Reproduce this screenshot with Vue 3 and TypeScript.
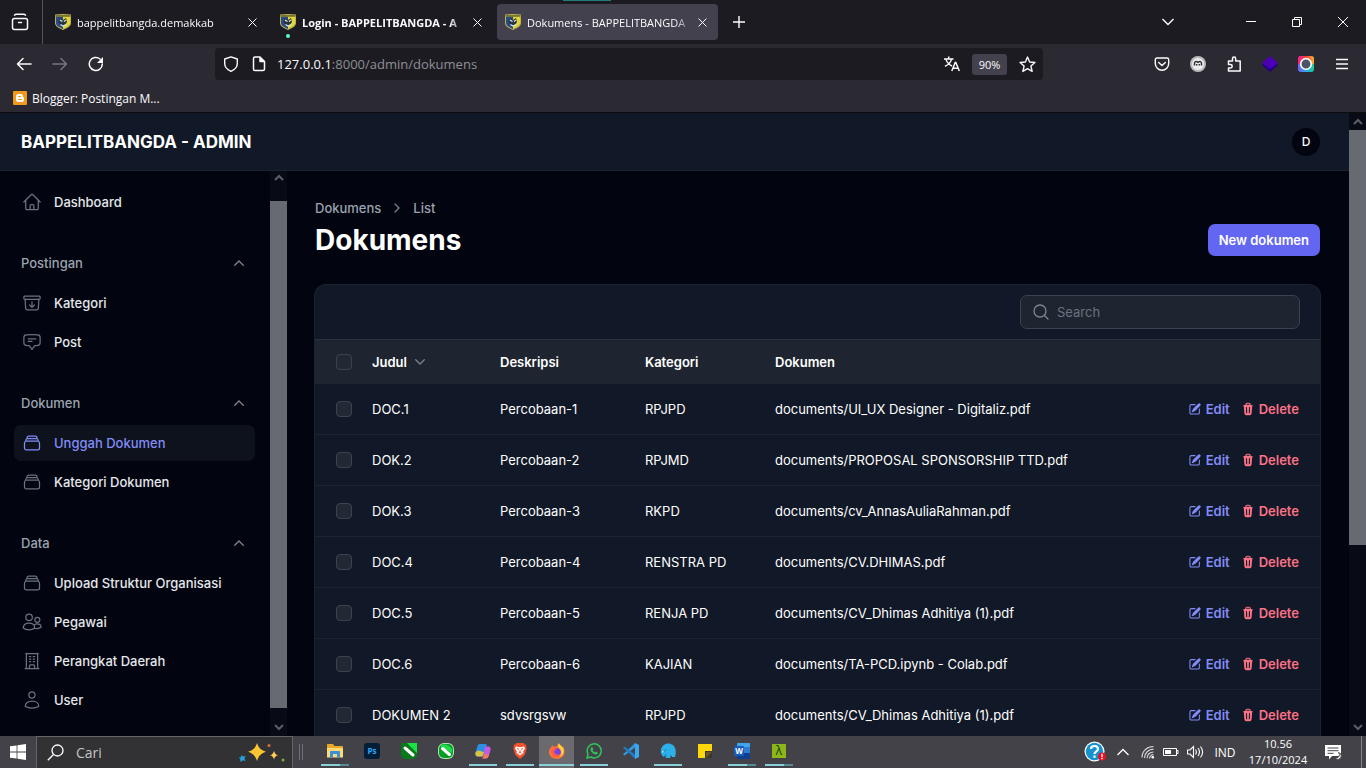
<script setup lang="ts">
import { ref } from 'vue'

interface Tab { title: string; active?: boolean; bold?: boolean; dot?: boolean }
interface NavItem { label: string; icon: string; active?: boolean }
interface NavGroup { label: string; items: NavItem[] }
interface Row { judul: string; deskripsi: string; kategori: string; dokumen: string; checked: boolean }
interface TaskApp { name: string; run?: 'one' | 'many'; active?: boolean }

const tabs: Tab[] = [
  { title: 'bappelitbangda.demakkab' },
  { title: 'Login - BAPPELITBANGDA - A', bold: true, dot: true },
  { title: 'Dokumens - BAPPELITBANGDA', active: true },
]

const icons: Record<string, string> = {
  home: 'M2.25 12l8.954-8.955c.44-.439 1.152-.439 1.591 0L21.75 12M4.5 9.75v10.125c0 .621.504 1.125 1.125 1.125H9.75v-4.875c0-.621.504-1.125 1.125-1.125h2.25c.621 0 1.125.504 1.125 1.125V21h4.125c.621 0 1.125-.504 1.125-1.125V9.75M8.25 21h8.25',
  archive: 'M20.25 7.5l-.625 10.632a2.25 2.25 0 01-2.247 2.118H6.622a2.25 2.25 0 01-2.247-2.118L3.75 7.5m8.25 3v6.75m0 0l-3-3m3 3l3-3M3.375 7.5h17.25c.621 0 1.125-.504 1.125-1.125v-1.5c0-.621-.504-1.125-1.125-1.125H3.375c-.621 0-1.125.504-1.125 1.125v1.5c0 .621.504 1.125 1.125 1.125z',
  chat: 'M7.5 8.25h9m-9 3H12m-9.75 1.51c0 1.6 1.123 2.994 2.707 3.227 1.129.166 2.27.293 3.423.379.35.026.67.21.865.501L12 21l2.755-4.133a1.14 1.14 0 01.865-.501 48.172 48.172 0 003.423-.379c1.584-.233 2.707-1.626 2.707-3.228V6.741c0-1.602-1.123-2.995-2.707-3.228A48.394 48.394 0 0012 3c-2.392 0-4.744.175-7.043.513C3.373 3.746 2.25 5.14 2.25 6.741v6.018z',
  stack: 'M6 6.878V6a2.25 2.25 0 012.25-2.25h7.5A2.25 2.25 0 0118 6v.878m-12 0c.235-.083.487-.128.75-.128h10.5c.263 0 .515.045.75.128m-12 0A2.25 2.25 0 004.5 9v.878m13.5-3A2.25 2.25 0 0119.5 9v.878m0 0a2.246 2.246 0 00-.75-.128H5.25c-.263 0-.515.045-.75.128m15 0A2.25 2.25 0 0121 12v6a2.25 2.25 0 01-2.25 2.25H5.25A2.25 2.25 0 013 18v-6c0-.98.626-1.813 1.5-2.122',
  users: 'M12.4 6.4a3.9 3.9 0 11-7.8 0 3.9 3.9 0 017.8 0zM21.4 9.3a3 3 0 11-6 0 3 3 0 016 0zM1.5 19.2c0-3.7 3-6 6.9-6s6.9 2.300 6.900 6c-1.800 1.600-4.200 2.300-6.900 2.300s-5.100-.7-6.900-2.300zM14.600 15.700c.9-.9 2.200-1.400 3.600-1.400 2.800 0 4.700 1.600 4.700 4-1.600 1.300-4.400 1.800-7.500 1.400',
  building: 'M3.75 21h16.5M4.5 3h15M5.25 3v18m13.5-18v18M9 6.75h1.5m-1.5 3h1.5m-1.5 3h1.5m3-6H15m-1.5 3H15m-1.5 3H15M9 21v-3.375c0-.621.504-1.125 1.125-1.125h3.75c.621 0 1.125.504 1.125 1.125V21',
  user: 'M15.75 6a3.75 3.75 0 11-7.5 0 3.75 3.75 0 017.5 0zM3.900 19.500c0-3.700 3.600-6.100 8.100-6.100s8.100 2.400 8.100 6.100c-2.200 1.500-5 2.300-8.100 2.300s-5.900-.8-8.100-2.300z',
}

const groups: NavGroup[] = [
  { label: 'Postingan', items: [{ label: 'Kategori', icon: 'archive' }, { label: 'Post', icon: 'chat' }] },
  { label: 'Dokumen', items: [{ label: 'Unggah Dokumen', icon: 'stack', active: true }, { label: 'Kategori Dokumen', icon: 'stack' }] },
  {
    label: 'Data',
    items: [
      { label: 'Upload Struktur Organisasi', icon: 'stack' },
      { label: 'Pegawai', icon: 'users' },
      { label: 'Perangkat Daerah', icon: 'building' },
      { label: 'User', icon: 'user' },
    ],
  },
]

const rows = ref<Row[]>([
  { judul: 'DOC.1', deskripsi: 'Percobaan-1', kategori: 'RPJPD', dokumen: 'documents/UI_UX Designer - Digitaliz.pdf', checked: false },
  { judul: 'DOK.2', deskripsi: 'Percobaan-2', kategori: 'RPJMD', dokumen: 'documents/PROPOSAL SPONSORSHIP TTD.pdf', checked: false },
  { judul: 'DOK.3', deskripsi: 'Percobaan-3', kategori: 'RKPD', dokumen: 'documents/cv_AnnasAuliaRahman.pdf', checked: false },
  { judul: 'DOC.4', deskripsi: 'Percobaan-4', kategori: 'RENSTRA PD', dokumen: 'documents/CV.DHIMAS.pdf', checked: false },
  { judul: 'DOC.5', deskripsi: 'Percobaan-5', kategori: 'RENJA PD', dokumen: 'documents/CV_Dhimas Adhitiya (1).pdf', checked: false },
  { judul: 'DOC.6', deskripsi: 'Percobaan-6', kategori: 'KAJIAN', dokumen: 'documents/TA-PCD.ipynb - Colab.pdf', checked: false },
  { judul: 'DOKUMEN 2', deskripsi: 'sdvsrgsvw', kategori: 'RPJPD', dokumen: 'documents/CV_Dhimas Adhitiya (1).pdf', checked: false },
])

const search = ref('')
const address = ref('')

const apps: TaskApp[] = [
  { name: 'explorer', run: 'many' },
  { name: 'photoshop' },
  { name: 'coreldraw' },
  { name: 'corel' },
  { name: 'copilot', run: 'one' },
  { name: 'brave', run: 'one' },
  { name: 'firefox', run: 'one', active: true },
  { name: 'whatsapp', run: 'one' },
  { name: 'vscode' },
  { name: 'laragon', run: 'one' },
  { name: 'notes' },
  { name: 'word', run: 'many' },
  { name: 'terminal', run: 'many' },
]

function toggleAll(e: Event) {
  const on = (e.target as HTMLInputElement).checked
  rows.value.forEach((r) => (r.checked = on))
}
</script>

<template>
  <div class="desktop">
    <!-- Browser tab strip -->
    <div class="tabstrip">
      <span class="loading"></span>
      <button class="view" aria-label="Firefox View">
        <svg width="18" height="18" viewBox="0 0 18 18" fill="none" stroke="currentColor" stroke-width="1.500" stroke-linecap="round">
          <rect x="1.500" y="5.500" width="15" height="11" rx="2" /><path d="M3.500 2.200C4 1.400 4.500 1.200 5.500 1.200h7c1 0 1.500.2 2 1M7.500 9.500h3" />
        </svg>
      </button>
      <div v-for="t in tabs" :key="t.title" class="tab" :class="{ active: t.active, bold: t.bold }">
        <span class="favicon">
          <svg width="16" height="16" viewBox="0 0 16 16">
            <path d="M0 .5 8 0l8 .5v9C15.500 13 11 14.500 8 16 5 14.500.5 13 0 9.500z" fill="#b9b555" />
            <path d="M1 2.500h7V15C5 13.500 1.500 12 1 9.500z" fill="#2b4a86" />
            <path d="M8 2.500h7v6c-.5 3-4 5-7 6z" fill="#e5d733" />
            <path d="M.5 1h15v1.800H.5z" fill="#77772f" />
            <path d="M5 4l3 2 3-2 1 4-2 3-2 1-3-1.500L3.500 8z" fill="#26353f" />
            <path d="M5 6.200l2.500 1.300M9 7.500l2-1.500M5.500 10.500 8 12l3-1.500" fill="none" stroke="#d8e4ea" stroke-width="1.300" />
          </svg>
          <i v-if="t.dot" class="dot"></i>
        </span>
        <span class="tabtitle">{{ t.title }}</span>
        <button class="tabclose" aria-label="Close tab">
          <svg width="9" height="9" viewBox="0 0 9 9" stroke="currentColor"><path d="M.5.5l8 8M8.500.5l-8 8" /></svg>
        </button>
      </div>
      <button class="newtab" aria-label="New tab">
        <svg width="12" height="12" viewBox="0 0 12 12" stroke="currentColor" stroke-width="1.400"><path d="M6 0v12M0 6h12" /></svg>
      </button>
      <div class="spring"></div>
      <button class="alltabs" aria-label="List all tabs">
        <svg width="12" height="8" viewBox="0 0 12 8" fill="none" stroke="currentColor" stroke-width="1.400"><path d="M.5 1 6 6.500 11.500 1" /></svg>
      </button>
      <button class="winbtn" aria-label="Minimize"><svg width="10" height="10" viewBox="0 0 10 10"><path d="M0 4.500h10" stroke="#fff" /></svg></button>
      <button class="winbtn" aria-label="Restore">
        <svg width="10" height="10" viewBox="0 0 10 10" fill="none" stroke="#fff"><path d="M.5 2.500h7v7h-7zM2.500 2.500v-2h7v7h-2" /></svg>
      </button>
      <button class="winbtn" aria-label="Close"><svg width="10" height="10" viewBox="0 0 10 10" stroke="#fff"><path d="M0 0l10 10M10 0 0 10" /></svg></button>
    </div>

    <!-- Navigation toolbar -->
    <div class="toolbar">
      <button class="tool" aria-label="Back">
        <svg width="16" height="16" viewBox="0 0 16 16" fill="none" stroke="currentColor" stroke-width="1.500" stroke-linecap="round" stroke-linejoin="round"><path d="M15 8H1.500M7 2.500 1.500 8 7 13.500" /></svg>
      </button>
      <button class="tool dim" aria-label="Forward">
        <svg width="16" height="16" viewBox="0 0 16 16" fill="none" stroke="currentColor" stroke-width="1.500" stroke-linecap="round" stroke-linejoin="round"><path d="M1 8h13.500M9 2.500 14.500 8 9 13.500" /></svg>
      </button>
      <button class="tool" aria-label="Reload">
        <svg width="16" height="16" viewBox="0 0 16 16" fill="none" stroke="currentColor" stroke-width="1.500" stroke-linecap="round"><path d="M14.300 8A6.500 6.500 0 1 1 12 3" /><path d="M15 1v6H9z" fill="currentColor" stroke="none" /></svg>
      </button>
      <div class="urlbar">
        <svg class="urlicon" width="16" height="16" viewBox="0 0 16 16" fill="none" stroke="currentColor" stroke-width="1.400" stroke-linejoin="round"><path d="M8 .8 14.300 3v4.500c0 3.500-2.500 6.200-6.300 7.800C4.200 13.700 1.700 11 1.700 7.500V3z" /></svg>
        <svg class="urlicon" width="16" height="16" viewBox="0 0 16 16" fill="none" stroke="currentColor" stroke-width="1.500" stroke-linejoin="round"><path d="M2.500 2.500c0-1 .5-1.500 1.500-1.500h5l4.500 4.500V13c0 1-.5 1.500-1.500 1.500H4c-1 0-1.500-.5-1.500-1.500z" /><path d="M9 1v4.500h4.500" fill="currentColor" /></svg>
        <label class="address">
          <span class="host">127.0.0.1</span><span>:8000/admin/dokumens</span>
          <input v-model="address" type="text" aria-label="Address" />
        </label>
        <button class="urlbtn" aria-label="Translate page">
          <svg width="16" height="16" viewBox="0 0 16 16" fill="none" stroke="currentColor" stroke-width="1.500"><path d="M0 3h9.500M4.700.5V3M2 3c.5 3 3 5.500 6 7M7.500 3C7 6 4.500 8.700 1 10.300M7.800 15l3.400-8.500h.6L15.300 15M9 12.300h5" /></svg>
        </button>
        <button class="zoom">90%</button>
        <button class="urlbtn" aria-label="Bookmark">
          <svg width="17" height="17" viewBox="0 0 16 16" fill="none" stroke="currentColor" stroke-width="1.300" stroke-linejoin="round"><path d="m8 1 2 4.600 5 .5-3.800 3.300 1.200 5.100L8 11.900l-4.400 2.600 1.200-5.100L1 6.100l5-.5z" /></svg>
        </button>
      </div>
      <button class="tool" aria-label="Pocket">
        <svg width="16" height="16" viewBox="0 0 16 16" fill="none" stroke="currentColor" stroke-width="1.400" stroke-linecap="round" stroke-linejoin="round"><path d="M3 2h10c1 0 1.700.7 1.700 1.700V7.500a6.700 6.700 0 0 1-13.400 0V3.700C1.300 2.700 2 2 3 2zM4.700 6.500 8 9.500l3.300-3" /></svg>
      </button>
      <button class="tool" aria-label="Extension">
        <svg width="16" height="16" viewBox="0 0 16 16"><circle cx="8" cy="8" r="8" fill="#b9b9bd" /><circle cx="8" cy="8" r="6" fill="#ececee" /><path d="M4.500 9.500V7.500C4.500 5.500 6 5 8 6.300c2-1.300 3.500-.8 3.500 1.200v2M6.700 9.500V8M9.300 9.500V8" fill="none" stroke="#303035" stroke-width="1.500" /></svg>
      </button>
      <button class="tool" aria-label="Extensions">
        <svg width="16" height="16" viewBox="0 0 16 16" fill="none" stroke="currentColor" stroke-width="1.500" stroke-linejoin="round"><path d="M2.500 15v-3h2a1.700 1.700 0 0 0 0-3.400h-2V5h4V2.700a1.600 1.600 0 0 1 3.200 0V5h4.500v10z" /></svg>
      </button>
      <button class="tool" aria-label="Stack extension">
        <svg width="16" height="16" viewBox="0 0 16 16"><path d="M8 3l8 6-8 7-8-7z" fill="#260080" /><path d="M8 0l8 7-8 6-8-6z" fill="#4b00b5" /></svg>
      </button>
      <button class="tool" aria-label="Camera extension">
        <svg width="16" height="16" viewBox="0 0 16 16">
          <defs>
            <linearGradient id="camTop" x1="0" y1="0" x2="1" y2="0"><stop offset="0" stop-color="#f0208a" /><stop offset=".5" stop-color="#ff3a3a" /><stop offset="1" stop-color="#f8b02c" /></linearGradient>
            <linearGradient id="camLow" x1="0" y1="0" x2="1" y2="0"><stop offset="0" stop-color="#7a5cf5" /><stop offset=".5" stop-color="#28a8f0" /><stop offset="1" stop-color="#1fcf8d" /></linearGradient>
          </defs>
          <rect width="16" height="16" rx="3" fill="url(#camLow)" /><path d="M0 8V3a3 3 0 0 1 3-3h10a3 3 0 0 1 3 3v5z" fill="url(#camTop)" />
          <circle cx="8" cy="8" r="5.300" fill="#4a5568" stroke="#fff" stroke-width="1.700" />
        </svg>
      </button>
      <button class="tool" aria-label="Menu">
        <svg width="12" height="12" viewBox="0 0 12 12" stroke="currentColor" stroke-width="1.300"><path d="M0 1.500h12M0 6h12M0 10.500h12" /></svg>
      </button>
      <span class="toolend"></span>
    </div>

    <div class="bookmarks">
      <a href="#blogger">
        <svg width="14" height="14" viewBox="0 0 14 14"><rect width="14" height="14" rx="1" fill="#f09a1d" /><path d="M5.500 3h2A2.500 2.500 0 0 1 10 5.500c0 .7.3.9 1 1v2A2.500 2.500 0 0 1 8.500 11h-3A2.500 2.500 0 0 1 3 8.500v-3A2.500 2.500 0 0 1 5.500 3z" fill="#fff" /><path d="M5.500 5.500h2M5.500 8.500h3" stroke="#f09a1d" stroke-linecap="round" /></svg>
        Blogger: Postingan M...
      </a>
    </div>

    <!-- Admin panel -->
    <div class="viewport">
      <div class="app">
        <header class="topbar">
          <a class="brand" href="#home">BAPPELITBANGDA - ADMIN</a>
          <button class="avatar" aria-label="User menu">D</button>
        </header>
        <div class="body">
          <aside class="sidebar">
            <nav class="nav">
              <a class="item" href="#dashboard">
                <svg width="20" height="20" viewBox="0 0 24 24"><path :d="icons.home" /></svg>Dashboard
              </a>
              <section v-for="g in groups" :key="g.label" class="group">
                <button class="grouphead">
                  {{ g.label }}
                  <svg width="10" height="6" viewBox="0 0 10 6"><path d="M.7 5.300 5 1l4.300 4.300" /></svg>
                </button>
                <div class="items">
                  <a v-for="i in g.items" :key="i.label" class="item" :class="{ current: i.active }" :href="'#' + i.label">
                    <svg width="20" height="20" viewBox="0 0 24 24"><path :d="icons[i.icon]" /></svg>{{ i.label }}
                  </a>
                </div>
              </section>
            </nav>
            <div class="scroll side">
              <svg width="10" height="7" viewBox="0 0 10 7"><path d="M1 6l4-4 4 4" /></svg>
              <div class="track"><div class="thumb"></div></div>
              <svg width="10" height="7" viewBox="0 0 10 7"><path d="M1 1l4 4 4-4" /></svg>
            </div>
          </aside>

          <main class="main">
            <div class="pagehead">
              <div>
                <nav class="crumbs">
                  <a href="#dokumens">Dokumens</a>
                  <svg width="6" height="10" viewBox="0 0 6 10"><path d="M1 1l4 4-4 4" /></svg>
                  <span>List</span>
                </nav>
                <h1>Dokumens</h1>
              </div>
              <button class="primary">New dokumen</button>
            </div>

            <div class="card">
              <div class="cardtop">
                <label class="search">
                  <svg width="16" height="16" viewBox="0 0 16 16"><circle cx="7" cy="7" r="6" /><path d="M11.500 11.500 15 15" /></svg>
                  <input v-model="search" type="search" placeholder="Search" aria-label="Search" />
                </label>
              </div>
              <table>
                <colgroup><col class="c1" /><col class="c2" /><col class="c3" /><col class="c4" /><col /><col class="c6" /></colgroup>
                <thead>
                  <tr>
                    <th class="pick"><input type="checkbox" aria-label="Select all" @change="toggleAll" /></th>
                    <th>
                      <button class="sort">Judul <svg width="10" height="6" viewBox="0 0 10 6"><path d="M.7.7 5 5 9.300.7" /></svg></button>
                    </th>
                    <th>Deskripsi</th><th>Kategori</th><th>Dokumen</th><th></th>
                  </tr>
                </thead>
                <tbody>
                  <tr v-for="r in rows" :key="r.judul">
                    <td class="pick"><input v-model="r.checked" type="checkbox" :aria-label="'Select ' + r.judul" /></td>
                    <td>{{ r.judul }}</td><td>{{ r.deskripsi }}</td><td>{{ r.kategori }}</td><td>{{ r.dokumen }}</td>
                    <td>
                      <div class="actions">
                        <a class="edit" href="#edit">
                          <svg width="14" height="14" viewBox="0 0 20 20"><path d="m5.433 13.917 1.262-3.155A4 4 0 0 1 7.580 9.420l6.920-6.918a2.121 2.121 0 0 1 3 3l-6.920 6.918c-.383.383-.84.685-1.343.886l-3.154 1.262a.5.5 0 0 1-.65-.65Z" /><path d="M3.500 5.750c0-.69.56-1.250 1.250-1.250H10A.75.75 0 0 0 10 3H4.750A2.750 2.750 0 0 0 2 5.750v9.500A2.750 2.750 0 0 0 4.750 18h9.500A2.750 2.750 0 0 0 17 15.250V10a.75.75 0 0 0-1.500 0v5.250c0 .69-.56 1.250-1.250 1.250h-9.500c-.69 0-1.250-.56-1.250-1.250v-9.500Z" /></svg>Edit
                        </a>
                        <button class="delete">
                          <svg width="14" height="14" viewBox="0 0 20 20"><path fill-rule="evenodd" d="M8.750 1A2.750 2.750 0 0 0 6 3.750v.443c-.795.077-1.584.176-2.365.298a.75.75 0 1 0 .23 1.482l.149-.022.841 10.518A2.750 2.750 0 0 0 7.596 19h4.807a2.750 2.750 0 0 0 2.742-2.530l.841-10.520.149.023a.75.75 0 0 0 .23-1.482A41.030 41.030 0 0 0 14 4.193V3.750A2.750 2.750 0 0 0 11.250 1h-2.500ZM10 4c.84 0 1.673.025 2.500.075V3.750c0-.69-.56-1.250-1.250-1.250h-2.500c-.69 0-1.250.56-1.250 1.250v.325C8.327 4.025 9.160 4 10 4ZM8.580 7.720a.75.75 0 0 0-1.500.06l.3 7.500a.75.75 0 1 0 1.500-.06l-.3-7.500Zm4.340.06a.75.75 0 1 0-1.500-.06l-.3 7.500a.75.75 0 1 0 1.500.06l.3-7.500Z" /></svg>Delete
                        </button>
                      </div>
                    </td>
                  </tr>
                </tbody>
              </table>
            </div>
          </main>
        </div>
      </div>
      <div class="scroll page">
        <svg width="10" height="7" viewBox="0 0 10 7"><path d="M1 6l4-4 4 4" /></svg>
        <div class="track"><div class="thumb"></div></div>
        <svg width="10" height="7" viewBox="0 0 10 7"><path d="M1 1l4 4 4-4" /></svg>
      </div>
    </div>

    <!-- Windows taskbar -->
    <footer class="taskbar">
      <button class="start" aria-label="Start">
        <svg width="16" height="16" viewBox="0 0 16 16" fill="#fff"><path d="M0 2.300 6.600 1.400v6.200H0zM7.400 1.300 16 0v7.600H7.400zM0 8.400h6.600v6.200L0 13.700zM7.400 8.400H16V16l-8.600-1.300z" /></svg>
      </button>
      <label class="find">
        <svg width="17" height="17" viewBox="0 0 17 17" fill="none" stroke="#fff" stroke-width="1.300"><circle cx="10.500" cy="6.500" r="5.500" /><path d="M6.500 10.500.8 16.200" /></svg>
        <input type="text" placeholder="Cari" aria-label="Cari" />
        <svg width="48" height="20" viewBox="0 0 48 20">
          <path d="M19 0c1.800 5 3.500 7 9 8.800C22.500 10.700 20.800 13 19 18c-1.800-5-3.500-7.300-9-9.200C15.500 7 17.200 5 19 0z" fill="#fbc531" />
          <path d="M36 8c.8 2.500 1.500 3.500 4 4.300-2.500.7-3.200 1.700-4 4.200-.8-2.500-1.500-3.500-4-4.200 2.500-.8 3.200-1.800 4-4.300z" fill="#ffd050" />
          <path d="m3 12 2 1.500L7.500 13l-1 2.500 1 2.500-2.500-.7L2.500 19l-.2-2.500L1 14.500l2-.3z" fill="#25a0da" />
          <circle cx="31" cy="2.500" r="1.500" fill="#d96c3c" /><circle cx="45" cy="17" r="1.500" fill="#76b043" />
        </svg>
      </label>
      <span class="grip"></span>
      <div class="apps">
        <button v-for="a in apps" :key="a.name" class="appbtn" :class="[a.run, { on: a.active }]" :aria-label="a.name">
          <svg width="16" height="16" viewBox="0 0 16 16">
            <template v-if="a.name === 'explorer'">
              <path d="M0 2c0-.6.4-1 1-1h5l1.500 2H15c.6 0 1 .4 1 1v9H0z" fill="#e8a92b" /><path d="M0 5h16v9.500H0z" fill="#ffd974" /><path d="M3 14.500V9c0-.6.4-1 1-1h8c.6 0 1 .4 1 1v5.500h-3V11H6v3.500z" fill="#3a8fd8" />
            </template>
            <template v-else-if="a.name === 'photoshop'">
              <rect width="16" height="16" rx="3" fill="#001e36" /><text x="8" y="11" text-anchor="middle" font-size="8" font-weight="700" fill="#31a8ff">Ps</text>
            </template>
            <template v-else-if="a.name === 'coreldraw'">
              <path d="M0 0h16v13l-3 3H3l-3-3z" fill="#087a1b" /><path d="M0 0h16v10L6 0z" fill="#16e343" /><path d="M4 5l8 7" stroke="#fff" stroke-width="3" stroke-linecap="round" />
            </template>
            <template v-else-if="a.name === 'corel'">
              <rect width="16" height="16" rx="6" fill="#a9e5b0" /><rect x="1" y="1" width="14" height="14" rx="5" fill="#0a9c26" /><path d="M2 3q6-4 12 3v4z" fill="#20dc48" /><path d="M4.500 5.500l7 6" stroke="#fff" stroke-width="3" stroke-linecap="round" />
            </template>
            <template v-else-if="a.name === 'copilot'">
              <path d="M5 1h5.500c1.200 0 1.500 1 1.200 2L9 11.500C8.500 13 8 13.500 6.500 13.500H3C0 13.500 0 11 .8 8.500L2.200 4C2.800 2 3.500 1 5 1z" fill="#2c8fe6" /><path d="M.7 9l2.500-1.500L9 9l-1 3c-.4 1-1 1.500-2 1.500H3C.3 13.500.2 11 .7 9z" fill="#d9c43c" /><path d="M10 3.500h3c3 0 3 2.500 2.200 5L13.800 12.500c-.6 2-1.300 3-2.800 3H6.500C8 15.500 8 14 8.400 12.500z" fill="#c65be0" /><path d="M8.800 11.500h5.300c-.8 2.800-1.400 4-3.100 4H7c1.200-.5 1.300-2 1.800-4z" fill="#f27a58" />
            </template>
            <template v-else-if="a.name === 'brave'">
              <path d="M4.500 0h7l1.500 1.500 1.500.5-.3 2 .5 1.500-2 6.500L8 16l-4.700-4L1.300 5.500 1.800 4l-.3-2L3 1.500z" fill="#f0512b" /><path d="M4 3.500l4 .7 4-.7 1 2-2 3 .5 1.500L8 12.500 4.500 10 5 8.500l-2-3z" fill="#fff" /><path d="M5 5.500l2 .8M11 5.500l-2 .8M8 7v2.500M6.500 10 8 9.500l1.500.5" stroke="#f0512b" fill="none" />
            </template>
            <template v-else-if="a.name === 'firefox'">
              <path d="M3 2l2 2c1-.7 2-.8 3-.7C8 2 9 .8 10 0c0 2 3 2.500 4 4.500V3c3 5 2 12-5.500 13C3 16 0 13 0 9c0-2.500 1-4 2.500-5z" fill="#ff7139" /><path d="M10 0c0 2 3 3 4 5 2 4 0 8-4 9 3-3 3-6 0-9-1.500-1.500-1-3.500 0-5z" fill="#ffd43d" /><circle cx="8" cy="9" r="3.800" fill="#7542e5" /><path d="M2 7c2-1.500 4-1.500 6 0l-3 1c0 3 3 4 6 3-3 4-9 2-9-4z" fill="#ff5a4d" />
            </template>
            <template v-else-if="a.name === 'whatsapp'">
              <path d="M1 15l1-3.800A7 7 0 1 1 4.800 14z" fill="none" stroke="#2fc45b" stroke-width="1.500" /><path d="M5 4.500l1.500-.2.800 2-.8 1c.5 1 1.300 1.700 2.300 2.200l.9-1 2 1c.2 1.500-1.200 2.200-2.200 2C6.500 11 4.500 8 4.500 6z" fill="#2fc45b" />
            </template>
            <template v-else-if="a.name === 'vscode'">
              <path d="M12 0v4.500L1.500 12.500 0 11.200 8 4z" fill="#2c9be0" /><path d="M12 16v-4.500L1.500 3.500 0 4.800 8 12z" fill="#1f7cc0" /><path d="M12 0l4 2v12l-4 2z" fill="#3aa7ee" />
            </template>
            <template v-else-if="a.name === 'laragon'">
              <path d="M2 4c2-3.500 7-5 11-2 3 3 3.500 7 2 12h-3l-1-2-1 3H6l-1-3-1 2C1 12-.5 8 2 4z" fill="#2bb0e8" /><path d="M1 8c2 1 4 1 5-2M6 15l-.5-4" stroke="#1686bb" fill="none" /><circle cx="2.700" cy="8.700" r=".8" fill="#fff" />
            </template>
            <template v-else-if="a.name === 'notes'">
              <path d="M1 1h14v8l-6 6H1z" fill="#ffd60a" /><path d="M8 8h7v7H8z" fill="#3b372b" /><path d="M15 9l-6 6V9z" fill="#64542a" />
            </template>
            <template v-else-if="a.name === 'word'">
              <rect x="3" width="13" height="16" rx="1" fill="#2b7cd3" /><path d="M3 1c0-.6.4-1 1-1h11c.6 0 1 .4 1 1v3H3z" fill="#41a5ee" /><path d="M3 10h13v5c0 .6-.4 1-1 1H4c-.6 0-1-.4-1-1z" fill="#103f91" /><rect y="3" width="10" height="10" rx="1" fill="#185abd" /><text x="5" y="11" text-anchor="middle" font-size="8" font-weight="700" fill="#fff">W</text>
            </template>
            <template v-else>
              <rect x="1" y="1" width="14" height="14" fill="#8cb817" /><text x="8" y="12" text-anchor="middle" font-size="12" fill="#20310a">λ</text>
            </template>
          </svg>
        </button>
      </div>
      <div class="spring"></div>
      <button class="tray help" aria-label="Get help">
        <svg width="22" height="22" viewBox="0 0 22 22"><circle cx="10.500" cy="10.500" r="10" fill="#fff" /><circle cx="10.500" cy="10.500" r="8.700" fill="#1593cf" /><path d="M7 8c0-4 7-4 7 0 0 2.500-3.500 2.200-3.500 5M10.500 14.500v2.300" fill="none" stroke="#fff" stroke-width="2.200" /><circle cx="18" cy="15.500" r="4" fill="#e81123" /><path d="M18 12.800v3.400M18 17v1.300" stroke="#fff" stroke-width="1.400" /></svg>
      </button>
      <button class="tray help" aria-label="Show hidden icons"><svg width="12" height="8" viewBox="0 0 12 8" fill="none" stroke="#fff" stroke-width="1.300"><path d="M.5 7 6 1.500 11.500 7" /></svg></button>
      <button class="tray net" aria-label="Network">
        <svg width="14" height="14" viewBox="0 0 14 14" fill="none" stroke="#d8d8da" stroke-width="1.200"><path d="M1 12.500C1 6 6 1.500 12.500 1.500M3.500 13C3.500 8 7.500 4.200 12.500 4.200M6 13.200c0-3.500 3-6.200 6.500-6.200M8.500 13.500c0-2 2-3.800 4-3.800" /><circle cx="11.800" cy="12.300" r="1.300" fill="#fff" stroke="none" /></svg>
      </button>
      <button class="tray bat" aria-label="Battery">
        <svg width="16" height="10" viewBox="0 0 16 10"><path d="M.5 1.500h13v7H.5zM13.500 3.500H15v3h-1.500" fill="none" stroke="#fff" /><path d="M2 3h6v4H2z" fill="#fff" /></svg>
      </button>
      <button class="tray bat" aria-label="Volume">
        <svg width="17" height="14" viewBox="0 0 17 14" fill="none" stroke="#fff" stroke-width="1.100"><path d="M.5 5h2.500l3.500-3.500v11L3 9H.5zM8.500 4.500q1.800 2.500 0 5M11 3q3 4 0 8M13.500 1.500q4.200 5.500 0 11" /></svg>
      </button>
      <button class="tray lang">IND</button>
      <button class="tray clock"><span>10.56</span><span>17/10/2024</span></button>
      <button class="tray notif" aria-label="Notifications">
        <svg width="17" height="17" viewBox="0 0 17 17"><path d="M0 1h16v11H7l-3 3.500V12H0z" fill="#fff" /><path d="M2.500 4h11M2.500 6.700h11M2.500 9.300h6" stroke="#444349" /><path d="M9.500 13a3.500 3.500 0 1 0 4-4.500 3 3 0 0 1-4 4.500z" fill="#fff" stroke="#444349" /></svg>
      </button>
      <span class="peek"></span>
    </footer>
  </div>
</template>

<style>
body { margin: 0; background: #020510; }
</style>

<style scoped>
* { box-sizing: border-box; }
button, input { font: inherit; color: inherit; background: none; border: 0; padding: 0; margin: 0; outline: 0; }
button { display: flex; align-items: center; justify-content: center; cursor: pointer; }
a { color: inherit; text-decoration: none; }
svg { flex: none; display: block; }
.spring { flex: 1; }
.desktop { height: 100vh; display: flex; flex-direction: column; overflow: hidden; color: #fbfbfe; font-family: "Open Sans", "Noto Sans", sans-serif; font-size: 12px; }

.tabstrip { position: relative; flex: none; height: 44px; display: flex; align-items: center; background: #1c1b22; }
.loading { position: absolute; top: 0; left: 563px; width: 48px; height: 1px; background: #1e7d7d; }
.view { width: 43px; height: 44px; padding-right: 3px; border-right: 1px solid #55545c; margin-right: 4px; }
.tab { display: flex; align-items: center; width: 221px; height: 36px; padding: 0 8px; margin-right: 4px; border-radius: 4px; font-size: 11px; }
.tab.active { background: #42414d; }
.tab.bold { font-weight: 700; }
.favicon { position: relative; margin-right: 6px; }
.dot { position: absolute; left: 6px; bottom: -8px; width: 4px; height: 4px; border-radius: 50%; background: #54ffbd; }
.tabtitle { flex: 1; min-width: 0; overflow: hidden; white-space: nowrap; mask-image: linear-gradient(to right, #000 calc(100% - 20px), transparent); }
.tabclose { width: 16px; height: 24px; }
.newtab { width: 34px; height: 36px; }
.alltabs { width: 36px; height: 36px; margin-right: 42px; }
.winbtn { width: 46px; height: 44px; }

.toolbar { flex: none; display: flex; align-items: center; height: 40px; padding-left: 6px; background: #2b2a33; }
.tool { width: 36px; height: 32px; }
.toolend { width: 6px; }
.dim { color: #77767e; }
.urlbar { flex: 1; display: flex; align-items: center; height: 32px; margin: 0 101px; padding: 0 6px 0 8px; border-radius: 4px; background: #1c1b22; }
.urlicon { margin-right: 12px; }
.address { flex: 1; display: flex; font-size: 13px; line-height: 20px; color: #8f8f96; margin-left: -2px; white-space: nowrap; }
.address input { flex: 1; min-width: 0; }
.host { color: #fbfbfe; }
.urlbtn { width: 20px; height: 24px; }
.zoom { width: 35px; height: 21px; margin: 0 10px; border-radius: 3px; background: #42414d; font-size: 11px; }

.bookmarks { flex: none; height: 29px; padding: 0 13px; background: #2b2a33; border-bottom: 1px solid #0c0c0d; }
.bookmarks a { display: inline-flex; align-items: center; gap: 5px; height: 28px; }

.viewport { flex: 1; min-height: 0; display: flex; font-family: Inter, "Open Sans", sans-serif; font-size: 13px; font-weight: 500; background: #020510; }
.app { flex: 1; min-width: 0; display: flex; flex-direction: column; }
.topbar { flex: none; display: flex; align-items: center; justify-content: space-between; height: 58px; padding: 0 29px 0 21px; background: #111827; border-bottom: 1px solid #1d2330; }
.brand { font-size: 17px; font-weight: 700; color: #fff; }
.avatar { width: 28px; height: 28px; border-radius: 50%; background: #020510; font-size: 12px; }
.body { flex: 1; min-height: 0; display: flex; }
.sidebar { flex: none; display: flex; width: 287px; }
.nav { flex: 1; padding: 13px 15px 0 14px; overflow-y: auto; scrollbar-width: none; }
.item { display: flex; align-items: center; gap: 12px; height: 36px; padding: 0 8px; border-radius: 7px; color: #e5e7eb; white-space: nowrap; }
.item svg { fill: none; stroke: #6b7280; stroke-width: 1.5; stroke-linecap: round; stroke-linejoin: round; }
.item.current { background: #0e121c; color: #818cf8; }
.item.current svg { stroke: #818cf8; }
.group { margin-top: 25px; }
.grouphead { width: 100%; height: 36px; justify-content: space-between; padding: 0 11px 0 7px; margin-bottom: 4px; color: #9ca3af; }
.grouphead svg, .crumbs svg, .sort svg { fill: none; stroke: #7b828f; stroke-width: 1.3; stroke-linecap: round; }
.items { display: flex; flex-direction: column; gap: 3px; }

.scroll { flex: none; width: 17px; display: flex; flex-direction: column; align-items: center; padding: 5px 0; background: #080b15; }
.scroll svg { fill: none; stroke: #5c5e66; stroke-width: 2; }
.track { flex: 1; width: 100%; }
.thumb { background: #686a72; }
.side { padding-top: 3px; }
.side .track { padding: 20px 0 16px; }
.side .thumb { height: 100%; }
.page .track { padding: 5px 0; }
.page .thumb { height: calc(70% + 3px); }

.main { flex: 1; min-width: 0; padding: 27px 29px 0 28px; overflow-y: auto; scrollbar-width: none; }
.pagehead { display: flex; align-items: flex-end; justify-content: space-between; margin-bottom: 29px; }
.crumbs { display: flex; align-items: center; gap: 13px; height: 20px; color: #9ca3af; }
h1 { margin: 6px 0 0; font-size: 28px; line-height: 32px; font-weight: 700; color: #fff; }
.primary { height: 32px; padding: 0 11px; border-radius: 7px; background: #6366f1; color: #fff; font-weight: 600; }
.card { border-radius: 11px 11px 0 0; background: #111827; box-shadow: 0 0 0 1px #1b2230; }
.cardtop { display: flex; justify-content: flex-end; padding: 10px 20px 10px; }
.search { display: flex; align-items: center; gap: 8px; width: 280px; height: 34px; padding: 0 12px; border: 1px solid #3b424e; border-radius: 7px; background: #1e2530; }
.search svg { fill: none; stroke: #7d8491; stroke-width: 1.3; stroke-linecap: round; }
.search input { flex: 1; min-width: 0; font-weight: 400; }
.search input::placeholder { color: #6b7280; opacity: 1; }
table { width: 100%; table-layout: fixed; border-collapse: separate; border-spacing: 0; }
.c1 { width: 57px; } .c2 { width: 128px; } .c3 { width: 145px; } .c4 { width: 130px; } .c6 { width: 160px; }
th, td { padding: 0; text-align: left; white-space: nowrap; vertical-align: middle; }
th { height: 45px; border-top: 1px solid #2a303c; background: #1e2530; font-weight: 600; color: #fff; }
td { height: 51px; border-bottom: 1px solid #1e2432; color: #fff; font-weight: 400; }
.pick { padding-left: 21px; }
.pick input { appearance: none; display: block; width: 16px; height: 16px; border: 1px solid #3c434f; border-radius: 4px; background: #222934; }
.pick input:checked { background: #6366f1; }
.sort { gap: 8px; font-weight: 600; }
.actions { display: flex; justify-content: flex-end; gap: 11px; padding-right: 21px; font-weight: 600; }
.actions a, .actions button { display: flex; align-items: center; gap: 4px; }
.actions svg { fill: currentColor; }
.edit { color: #818cf8; }
.delete { color: #fb7185; }

.taskbar { flex: none; height: 32px; display: flex; align-items: stretch; background: #434248; color: #fff; }
.start { width: 36px; }
.find { display: flex; align-items: center; width: 257px; padding: 0 6px 0 10px; border: 1px solid #66656a; border-bottom: 0; background: #323234; }
.find input { flex: 1; min-width: 0; margin-left: 12px; font-size: 14px; }
.find input::placeholder { color: #c4c4c6; opacity: 1; }
.grip { width: 4px; height: 16px; margin: 8px 14px 0 6px; border: solid #717075; border-width: 0 1px; }
.apps { display: flex; gap: 2px; }
.appbtn { position: relative; width: 35px; padding-bottom: 2px; }
.appbtn.on { background: #6b6a6f; }
.one::after, .many::after { content: ""; position: absolute; left: 4px; right: 3px; bottom: 2px; height: 2px; background: #86d1d8; }
.many::after { background: linear-gradient(to right, #86d1d8 19px, #568c92 19px); }
.on::after { left: 0; right: 0; }
.help { width: 28px; }
.net { width: 22px; }
.bat { width: 24px; }
.lang { width: 36px; }
.clock { width: 70px; flex-direction: column; font-size: 11px; line-height: 16px; }
.notif { width: 40px; margin-right: 8px; }
.peek { width: 5px; border-left: 1px solid #85848a; }
</style>
